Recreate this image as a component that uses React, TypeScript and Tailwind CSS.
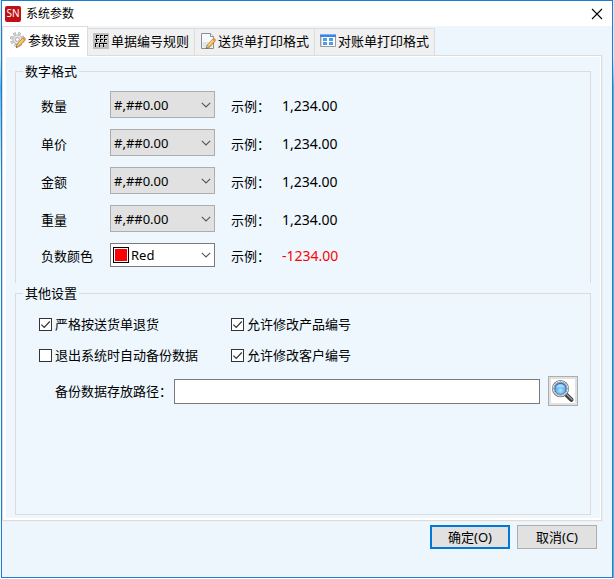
import React, { useState } from 'react';

type Tab = { id: string; title: string; icon: React.ReactNode };

// Bút chì dùng chung cho hai icon
const Pencil: React.FC = () => (
  <g>
    <path d="M7.2 12.2 13 5.6l2.4 2.1-5.9 6.6-3 1.1z" fill="#f6b73c" stroke="#8a5a1e" strokeWidth=".5" />
    <path d="m8.3 12.6 5.5-6.2" stroke="#ffe9a0" strokeWidth="1" />
    <path d="m12.2 6.5 1.3-1.5c.5-.5 2.8 1.4 2.3 2.1l-1.3 1.5z" fill="#e88a5a" />
    <path d="m7.2 12.2-.9 3.4 3.2-1.3z" fill="#f7dcae" stroke="#8a5a1e" strokeWidth=".4" />
    <path d="m6.3 15.6.4-1.5 1 .9z" fill="#333" />
  </g>
);

const GearIcon: React.FC = () => (
  <svg viewBox="0 0 16 16" className="size-4 shrink-0">
    <circle cx="7.3" cy="7.5" r="6.1" fill="none" stroke="#a6a6a6" strokeWidth="2.4" strokeDasharray="2.7 2.09" />
    <circle cx="7.3" cy="7.5" r="6" fill="none" stroke="#dedede" strokeWidth="1.4" strokeDasharray="1.7 3.01" strokeDashoffset="-.5" />
    <circle cx="7.3" cy="7.5" r="4.4" fill="#dcdcdc" stroke="#bcbcbc" strokeWidth="1.4" />
    <circle cx="7.3" cy="7.5" r="3.3" fill="none" stroke="#e6e6e6" strokeWidth="1.2" />
    <circle cx="7.3" cy="7.5" r="1.9" fill="#fff" stroke="#a0a0a0" strokeWidth=".8" />
    <Pencil />
  </svg>
);

const GridIcon: React.FC = () => (
  <svg viewBox="0 0 16 16" className="size-4 shrink-0" shapeRendering="crispEdges">
    <rect width="16" height="16" fill="#c0c0c0" />
    <path d="M3 3h11v1H3zM3 7h11v1H3zM2 11h11v1H2z" fill="#ececec" />
    <path d="M3 2h3v1H3zM7 2h3v1H7zM11 2h4v1h-4zM2 6h4v1H2zM7 6h3v1H7zM11 6h3v1h-3zM2 10h3v1H2zM6 10h4v1H6zM11 10h3v1h-3z" fill="#000" />
    <path d="M3 2h1v3H3zM7 2h1v3H7zM11 2h1v3h-1zM3 6h1v3H3zM7 6h1v3H7zM11 6h1v3h-1zM2 10h1v4H2zM6 10h1v4H6zM10 10h1v4h-1z" fill="#000" />
  </svg>
);

const PageIcon: React.FC = () => (
  <svg viewBox="0 0 16 16" className="size-4 shrink-0">
    <path d="M1.5.5h9l3 3v12h-12z" fill="#f6f9fc" stroke="#8a8f96" />
    <path d="M2.5 9h10v5.5h-10z" fill="#dde6ef" />
    <path d="M10.5.5v3h3" fill="#fff" stroke="#8a8f96" />
    <Pencil />
  </svg>
);

const WindowIcon: React.FC = () => (
  <svg viewBox="0 0 16 16" className="size-4 shrink-0">
    <path d="M.5 2.5h15v11H.5z" fill="#fff" stroke="#9b9b9b" />
    <path d="M0 1h16v3H0z" fill="#3f84e5" />
    <path d="M0 1h16v1H0z" fill="#7fb2f5" />
    <path d="M1 4h1v9H1z" fill="#d4d4d4" />
    <path d="M3 5h4v3H3zM9 5h4v3H9zM3 9h4v3H3zM9 9h4v3H9z" fill="#4f9bea" />
  </svg>
);

const SearchIcon: React.FC = () => (
  <svg viewBox="0 0 24 24" className="size-6">
    <defs>
      <radialGradient id="lens" cx=".5" cy=".65" r=".6">
        <stop offset="0" stopColor="#b4e6ff" />
        <stop offset=".6" stopColor="#62b4f0" />
        <stop offset="1" stopColor="#2a72c8" />
      </radialGradient>
    </defs>
    <path d="m14.8 15.2 5.6 5.6" stroke="#3b3b3b" strokeWidth="4.2" strokeLinecap="round" />
    <path d="m15 14.6 6 6" stroke="#a9a9a9" strokeWidth="1.2" strokeLinecap="round" />
    <circle cx="9.5" cy="9.6" r="7.6" fill="#fff" stroke="#757575" strokeWidth="2" />
    <circle cx="9.5" cy="9.6" r="7.4" fill="none" stroke="#e4e4e4" strokeWidth="1" />
    <circle cx="9.5" cy="9.6" r="5.9" fill="url(#lens)" stroke="#2b5f9e" strokeWidth=".7" />
    <path d="M5 8.8c.6-5 8.4-5 9 0-3-1.2-6-1.2-9 0z" fill="#d5effe" opacity=".65" />
  </svg>
);

const TABS: Tab[] = [
  { id: 'params', title: '参数设置', icon: <GearIcon /> },
  { id: 'rules', title: '单据编号规则', icon: <GridIcon /> },
  { id: 'delivery', title: '送货单打印格式', icon: <PageIcon /> },
  { id: 'statement', title: '对账单打印格式', icon: <WindowIcon /> },
];

const FORMATS = [
  { id: 'quantity', label: '数量' },
  { id: 'price', label: '单价' },
  { id: 'amount', label: '金额' },
  { id: 'weight', label: '重量' },
];

const OPTIONS = [
  { id: 'strict', label: '严格按送货单退货', checked: true },
  { id: 'product', label: '允许修改产品编号', checked: true },
  { id: 'backup', label: '退出系统时自动备份数据', checked: false },
  { id: 'customer', label: '允许修改客户编号', checked: true },
];

const Chevron: React.FC = () => (
  <svg viewBox="0 0 10 6" className="pointer-events-none absolute right-1 top-1/2 h-1.5 w-2.5 -translate-y-1/2">
    <path d="m.8.8 4.2 4.2L9.2.8" fill="none" stroke="#555" strokeWidth="1.1" />
  </svg>
);

const FormatRow: React.FC<{ id: string; label: string }> = ({ id, label }) => (
  <div className="grid grid-cols-[69px_121px_51px_1fr] items-center">
    <label htmlFor={id} className="pt-0.5">{label}</label>
    <div className="relative w-[105px]">
      <select id={id} className="block h-[27px] w-full appearance-none border border-[#adadad] bg-[#e1e1e1] pl-[3px] leading-5">
        <option>#,##0.00</option>
      </select>
      <Chevron />
    </div>
    <span className="pt-0.5">示例：</span>
    <output htmlFor={id} className="pt-0.5 text-sm leading-5">1,234.00</output>
  </div>
);

const CheckOption: React.FC<{ label: string; checked: boolean }> = ({ label, checked }) => (
  <label className="flex items-center gap-[3px]">
    <span className="relative size-[13px]">
      <input type="checkbox" defaultChecked={checked} className="peer block size-[13px] appearance-none border border-[#333] bg-white" />
      <svg viewBox="0 0 13 13" className="pointer-events-none absolute inset-0 hidden size-[13px] peer-checked:block">
        <path d="m2.4 6.6 2.8 2.9 5.6-6" fill="none" stroke="#333" strokeWidth="1.2" />
      </svg>
    </span>
    {label}
  </label>
);

const SettingsPanel: React.FC = () => {
  const [path, setPath] = useState('');

  return (
    <div className="flex flex-1 flex-col bg-[#edf7fd] px-[9px] pb-[3px] pt-1">
      <fieldset className="min-w-0 border border-b-0 border-[#dcdcdc] pb-4 pt-[10px]">
        <legend className="ml-[7px] px-0.5">数字格式</legend>
        <div className="flex flex-col gap-[11px] pl-[25px]">
          {FORMATS.map((f) => (
            <FormatRow key={f.id} id={f.id} label={f.label} />
          ))}
          <div className="grid grid-cols-[69px_121px_51px_1fr] items-center">
            <label htmlFor="negative" className="pt-0.5">负数颜色</label>
            <div className="relative w-[105px]">
              <select id="negative" className="block h-6 w-full appearance-none border border-[#7a7a7a] bg-white pl-5 leading-5">
                <option>Red</option>
              </select>
              <span className="pointer-events-none absolute left-[3px] top-1 size-4 border border-black bg-[#ff0000] ring-1 ring-inset ring-white"></span>
              <Chevron />
            </div>
            <span className="pt-0.5">示例：</span>
            <output htmlFor="negative" className="pt-0.5 text-sm leading-5 text-[#ff0000]">-1234.00</output>
          </div>
        </div>
      </fieldset>

      <fieldset className="min-w-0 flex-1 border border-[#dcdcdc] pt-[11px]">
        <legend className="ml-[7px] px-0.5">其他设置</legend>
        <div className="grid grid-cols-[192px_1fr] gap-y-[11px] pl-[23px]">
          {OPTIONS.map((o) => (
            <CheckOption key={o.id} label={o.label} checked={o.checked} />
          ))}
        </div>
        <div className="mt-[11px] flex items-center pl-[39px] pr-3">
          <label htmlFor="path" className="mr-0.5 shrink-0">备份数据存放路径：</label>
          <input
            id="path"
            type="text"
            value={path}
            onChange={(e) => setPath(e.target.value)}
            className="h-[25px] min-w-0 flex-1 border border-[#7a7a7a] bg-white px-1"
          />
          <button aria-label="浏览" className="ml-2 flex size-[30px] shrink-0 items-center justify-center border border-[#adadad] bg-[#e1e1e1]">
            <span className="bg-white"><SearchIcon /></span>
          </button>
        </div>
      </fieldset>
    </div>
  );
};

const App: React.FC = () => {
  const [active, setActive] = useState('params');

  return (
    <div className={`flex min-h-screen bg-white pb-px text-[13px] leading-5 text-black font-["Noto_Sans","Noto_Sans_CJK_SC",sans-serif]`}>
      <div className="w-px bg-linear-to-b from-[#dbe7f2] from-10% via-[#4bb4e6] via-15% to-[#eef3f8] to-30%"></div>
      <div className="flex min-w-0 flex-1 flex-col border border-[#1a7fd4] bg-[#eef6fd]">
        <header className="flex h-[25px] items-center gap-[5px] bg-white pl-[3px] pr-[9px] text-xs">
          <span className="flex size-4 items-center justify-center rounded-xs bg-[#bf1016] text-[10px] text-white">SN</span>
          <h1 className="flex-1">系统参数</h1>
          <button aria-label="关闭">
            <svg viewBox="0 0 12 12" className="size-3">
              <path d="m1 1 10 10M11 1 1 11" stroke="#000" strokeWidth="1.1" />
            </svg>
          </button>
        </header>

        <div role="tablist" className="flex items-end">
          {TABS.map((tab) => (
            <button
              key={tab.id}
              role="tab"
              aria-selected={tab.id === active}
              onClick={() => setActive(tab.id)}
              className={`flex items-center gap-0.5 whitespace-nowrap border-[#dcdcdc] ${
                tab.id === active ? 'relative z-10 -mb-px h-[30px] border border-b-0 bg-white px-[7px] pb-1' : 'h-[27px] border-r border-t bg-[#f0f0f0] px-[5px] pb-0.5'
              }`}
            >
              {tab.icon}
              {tab.title}
            </button>
          ))}
        </div>

        <main role="tabpanel" className="mr-[10px] flex flex-1 flex-col border border-[#dcdcdc] bg-white pb-0.5 pl-[3px] pr-px pt-px shadow-[1px_1px_0_#f0f0f0]">
          <SettingsPanel />
        </main>

        <footer className="flex justify-end gap-[7px] pb-7 pr-[15px] pt-1">
          <button className="h-6 w-20 border-2 border-[#0078d7] bg-[#e1e1e1]">确定(O)</button>
          <button className="h-6 w-20 border border-[#adadad] bg-[#e1e1e1]">取消(C)</button>
        </footer>
      </div>
      <div className="w-px bg-linear-to-b from-[#dbe7f2] from-10% to-[#4bb4e6] to-15%"></div>
    </div>
  );
};

export default App;
